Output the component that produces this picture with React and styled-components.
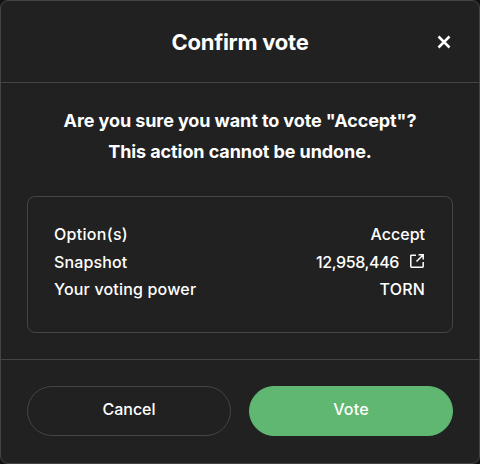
import React from 'react';
import styled, { createGlobalStyle } from 'styled-components';

const GlobalStyle = createGlobalStyle`
  * { box-sizing: border-box; }
  body {
    margin: 0;
    background: #121013;
    color: #fff;
    font-family: Inter, 'Liberation Sans', sans-serif;
    -webkit-font-smoothing: antialiased;
  }
`;

const Modal = styled.section`
  width: 480px;
  height: 464px;
  display: flex;
  flex-direction: column;
  background: #212121;
  border: 1px solid #454545;
  border-radius: 8px;
`;

const Header = styled.header`
  height: 82px;
  display: grid;
  grid-template-columns: 70px 1fr 70px;
  align-items: center;
  border-bottom: 1px solid #454545;
`;

const Title = styled.h3`
  grid-column: 2;
  margin: 0;
  text-align: center;
  font-size: 22px;
  line-height: 30px;
  font-weight: 700;
  letter-spacing: -0.25px;
`;

const CloseButton = styled.button`
  justify-self: center;
  display: flex;
  margin: 1px 0 0;
  padding: 0;
  border: 0;
  background: none;
  color: #fff;
`;

const Body = styled.div`
  flex: 1;
  padding: 22px 26px 0;
`;

const Message = styled.h4`
  margin: 0 0 29px;
  text-align: center;
  font-size: 18px;
  line-height: 31px;
  font-weight: 700;
  letter-spacing: -0.09px;
`;

const Line = styled.span`
  display: block;
`;

const Summary = styled.dl`
  height: 137px;
  margin: 0;
  padding: 24px 26px;
  border: 1px solid #454545;
  border-radius: 8px;
`;

const Row = styled.div`
  display: flex;
  justify-content: space-between;
  height: 27.5px;
  font-size: 16px;
  line-height: 27.5px;
  font-weight: 500;
`;

const Label = styled.dt`
  letter-spacing: ${({ $tracking }) => $tracking || 0}px;
`;

const Value = styled.dd`
  display: flex;
  align-items: center;
  margin: 0 1px 0 0;
  letter-spacing: ${({ $tracking }) => $tracking || 0}px;
`;

const LinkIcon = styled.svg`
  margin: 0 1px 2px 11px;
`;

const Footer = styled.footer`
  height: 104px;
  display: grid;
  grid-template-columns: 1fr 1fr;
  gap: 18px;
  padding: 26px 26px 27px;
  border-top: 1px solid #454545;
`;

const Button = styled.button`
  height: 50px;
  padding: 0 0 4px;
  border: 1px solid ${({ $primary }) => ($primary ? '#5fb771' : '#454545')};
  border-radius: 25px;
  background: ${({ $primary }) => ($primary ? '#5fb771' : 'transparent')};
  color: #fff;
  font: 500 16px/24px Inter, 'Liberation Sans', sans-serif;
  letter-spacing: ${({ $primary }) => ($primary ? '0.2px' : '-0.05px')};
`;

export default function App() {
  return (
    <>
      <GlobalStyle />
      <Modal role="dialog" aria-label="Confirm vote">
        <Header>
          <Title>Confirm vote</Title>
          <CloseButton aria-label="Close">
            <svg width="14" height="14" viewBox="0 0 14 14" fill="none" stroke="currentColor" strokeWidth="2.5">
              <path d="M1.5 1.5l11 11M12.5 1.5l-11 11" />
            </svg>
          </CloseButton>
        </Header>
        <Body>
          <Message>
            <Line>Are you sure you want to vote "Accept"?</Line>
            <Line>This action cannot be undone.</Line>
          </Message>
          <Summary>
            <Row>
              <Label $tracking={0.3}>Option(s)</Label>
              <Value>Accept</Value>
            </Row>
            <Row>
              <Label $tracking={0.12}>Snapshot</Label>
              <Value $tracking={-0.38}>
                12,958,446
                <LinkIcon width="14" height="14" viewBox="0 0 14 14" fill="none" stroke="currentColor" strokeWidth="1.5">
                  <path d="M6 1.2H1.5a.7.7 0 0 0-.7.7v10.6a.7.7 0 0 0 .7.7h11a.7.7 0 0 0 .7-.7V8M8.5.8h4.7v4.7M13 1L6.5 7.5" />
                </LinkIcon>
              </Value>
            </Row>
            <Row>
              <Label $tracking={0.18}>Your voting power</Label>
              <Value $tracking={0.2}>TORN</Value>
            </Row>
          </Summary>
        </Body>
        <Footer>
          <Button>Cancel</Button>
          <Button $primary>Vote</Button>
        </Footer>
      </Modal>
    </>
  );
}
